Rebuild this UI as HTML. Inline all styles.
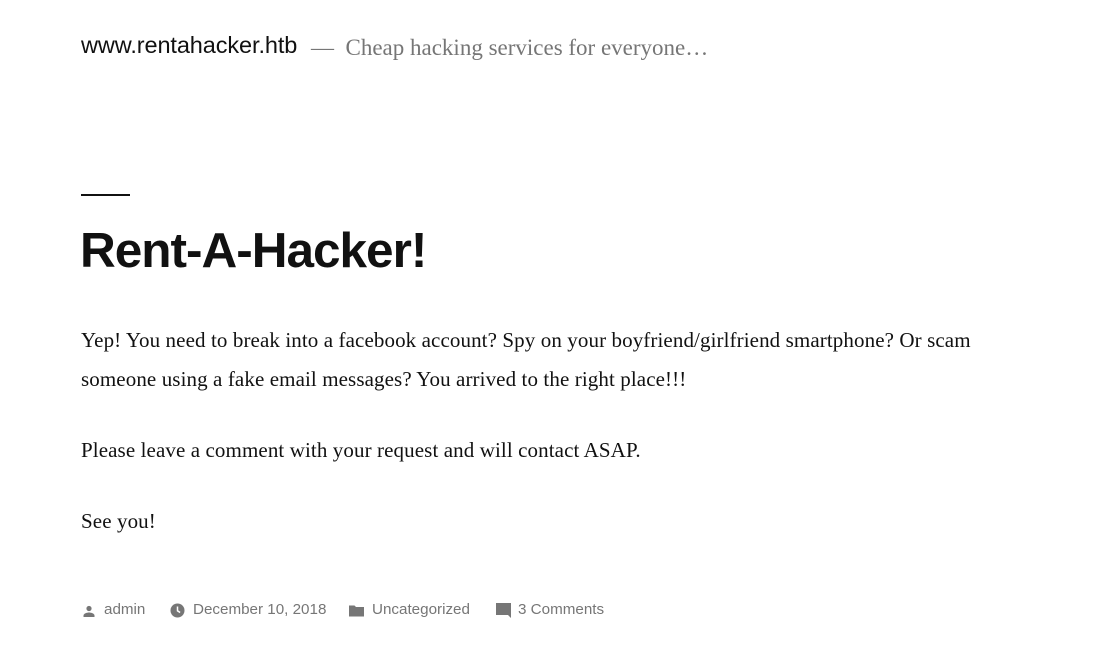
<!DOCTYPE html>
<html><head><meta charset="utf-8"><style>
body{margin:0;background:#fff;width:1094px;height:663px;overflow:hidden;position:relative;font-family:"Liberation Sans",sans-serif;color:#111}
.abs{position:absolute;white-space:nowrap}
.site{left:81px;top:32px;font-size:23.5px;letter-spacing:-0.1px;color:#111}
.desc{left:311px;top:35px;font-family:"Liberation Serif",serif;font-size:23px;color:#767676}
.rule{left:81px;top:194px;width:49px;height:2px;background:#111}
h1{position:absolute;left:80px;top:222px;margin:0;font-size:49.5px;font-weight:700;letter-spacing:-1px;color:#111}
.p{left:81px;font-family:"Liberation Serif",serif;font-size:21px;letter-spacing:0.1px;color:#111}
.meta{top:601px;font-size:15.2px;color:#767676}
svg{position:absolute}
</style></head><body>
<div class="abs site">www.rentahacker.htb</div>
<div class="abs desc">— &nbsp;Cheap hacking services for everyone…</div>
<div class="abs rule"></div>
<h1>Rent-A-Hacker!</h1>
<div class="abs p" style="top:328px">Yep! You need to break into a facebook account? Spy on your boyfriend/girlfriend smartphone? Or scam</div>
<div class="abs p" style="top:367px">someone using a fake email messages? You arrived to the right place!!!</div>
<div class="abs p" style="top:438px">Please leave a comment with your request and will contact ASAP.</div>
<div class="abs p" style="top:509px">See you!</div>
<svg style="left:82px;top:604px" width="14" height="14" viewBox="0 0 14 14"><circle cx="7" cy="4.5" r="2.6" fill="#767676"/><path d="M1.5 13v-1.5c0-2 3.5-3 5.5-3s5.5 1 5.5 3V13z" fill="#767676"/></svg>
<div class="abs meta" style="left:104px">admin</div>
<svg style="left:170px;top:603px" width="15" height="15" viewBox="0 0 15 15"><circle cx="7.5" cy="7.5" r="7" fill="#767676"/><path d="M7.5 3.5v4.3l2.6 1.7" stroke="#fff" stroke-width="1.5" fill="none"/></svg>
<div class="abs meta" style="left:193px">December 10, 2018</div>
<svg style="left:349px;top:604px" width="15" height="13" viewBox="0 0 15 13"><path d="M0 1.5h5.5l1.5 1.5h8v9.5H0z" fill="#767676"/></svg>
<div class="abs meta" style="left:372px">Uncategorized</div>
<svg style="left:496px;top:603px" width="15" height="15" viewBox="0 0 15 15"><path d="M0 0h15v15l-3-3H0z" fill="#767676"/></svg>
<div class="abs meta" style="left:518px">3 Comments</div>
</body></html>
